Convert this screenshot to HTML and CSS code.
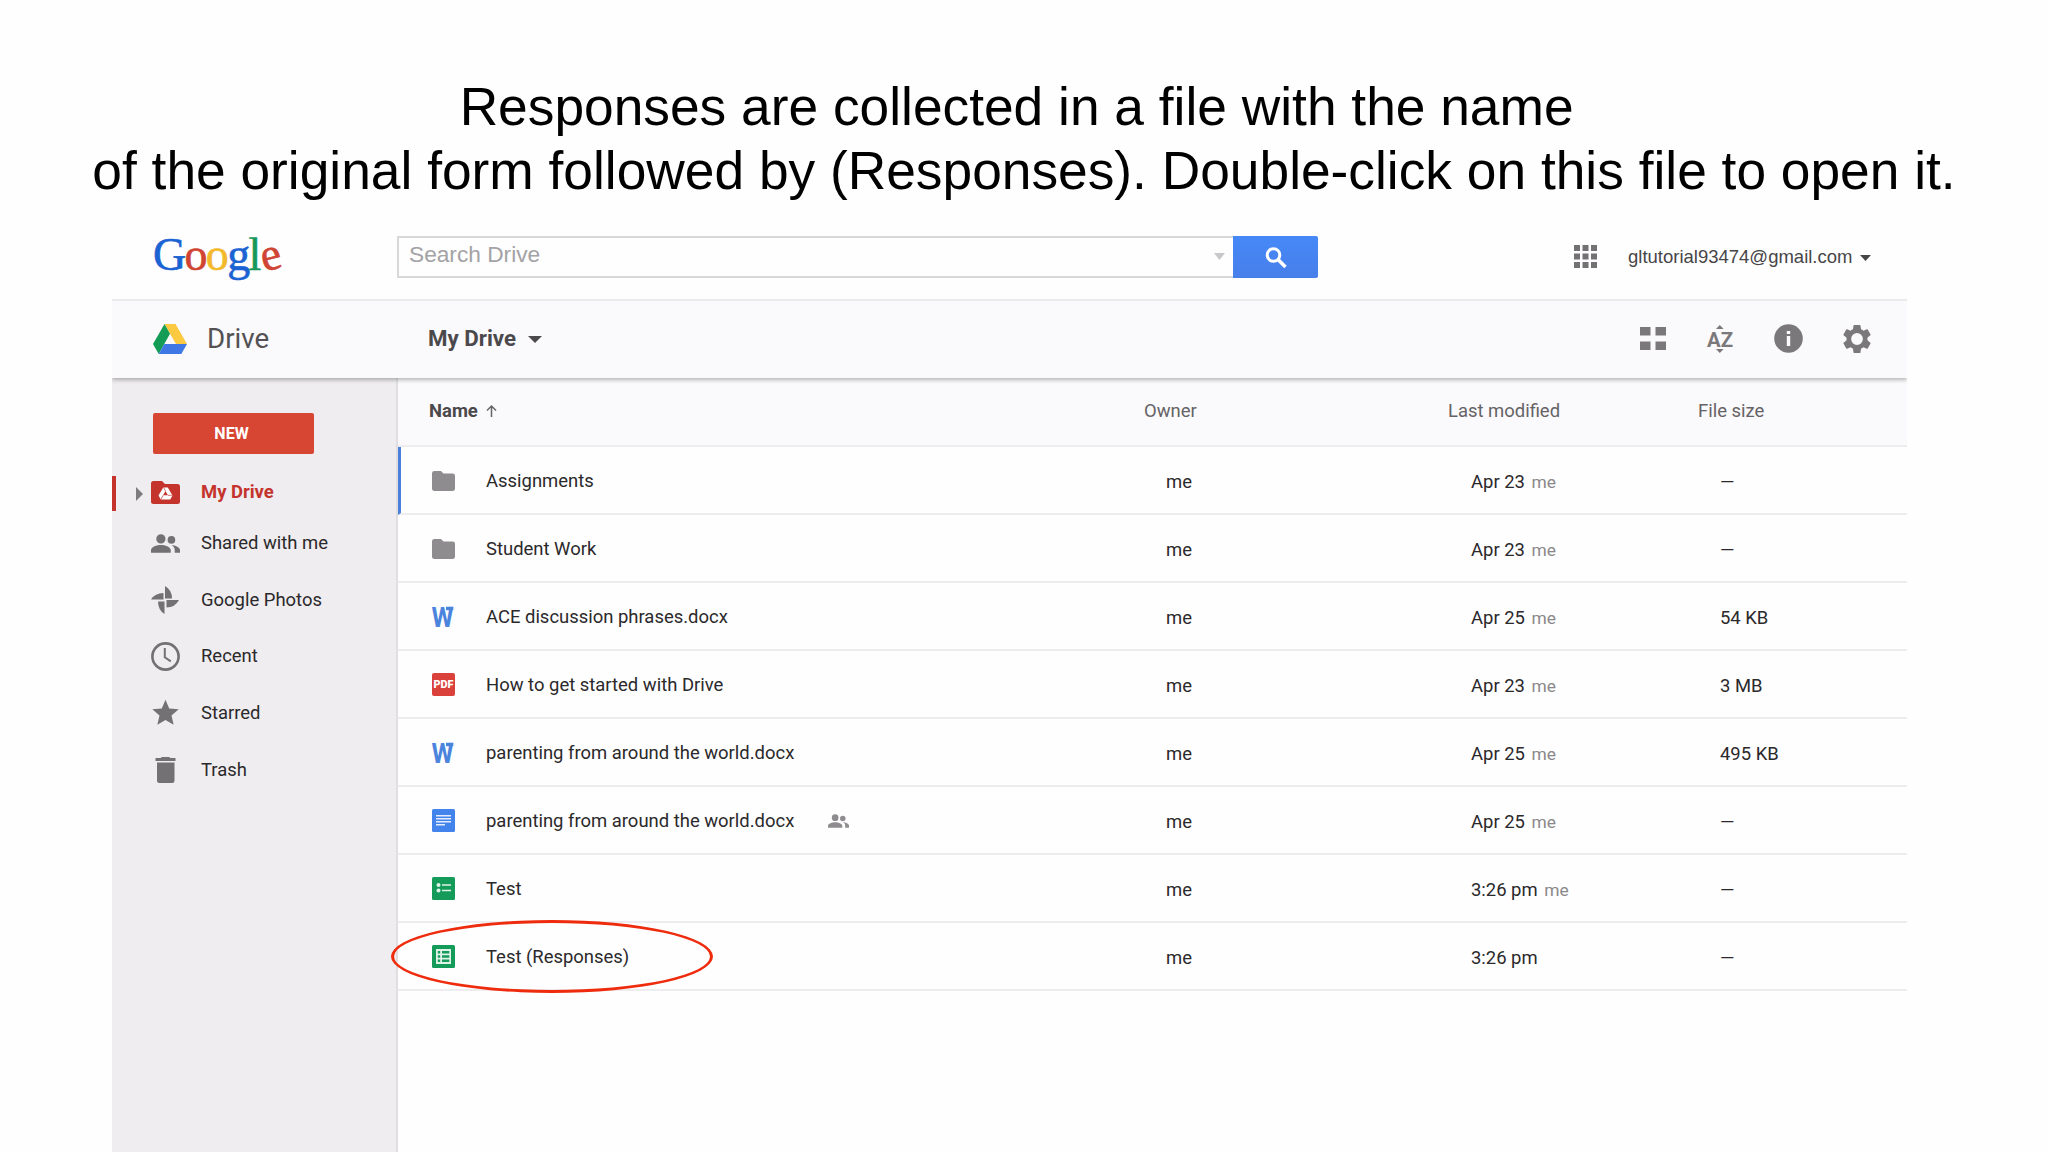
FILE: index.html
```
<!DOCTYPE html>
<html lang="en">
<head>
    <meta charset="UTF-8">
    <meta name="viewport" content="width=device-width, initial-scale=1.0">
    <title>My Drive - Google Drive</title>
    <link rel="stylesheet" href="styles.css">
</head>
<body>

<!-- shared icons -->
<svg class="sprite" aria-hidden="true">
    <symbol id="people" viewBox="1 5 22 14">
        <path d="M16.67 13.13C18.04 14.06 19 15.32 19 17v2h4v-2c0-2.18-3.57-3.47-6.33-3.87z M8.500 12a3.500 3.500 0 1 0 0-7 3.500 3.500 0 0 0 0 7z M16.500 12.200a2.900 2.900 0 1 0 0-5.800 2.900 2.900 0 0 0 0 5.800z M8.500 13.200C5.500 13.200 1 14.600 1 17v2h15v-2c0-2.400-4.500-3.800-7.500-3.800z"/>
    </symbol>
    <symbol id="folder" viewBox="0 0 23 20">
        <path d="M2.500 0h6.500l2.500 2.500h9q2.500 0 2.500 2.300v12.900q0 2.300-2.500 2.300h-18q-2.500 0-2.500-2.300v-15.400q0-2.300 2.500-2.300z"/>
    </symbol>
    <symbol id="word" viewBox="0 0 23 23">
        <text x="-0.500" y="22" font-size="28.500" font-weight="700" textLength="22" lengthAdjust="spacingAndGlyphs">W</text>
        <rect x="14" y="1.700" width="7.300" height="3.500"/>
    </symbol>
</svg>

<div class="slide">
    <h1>Responses are collected in a file with the name&nbsp;<br>of the original form followed by (Responses). Double-click on this file to open it.</h1>

    <div class="app">
        <div class="topbar">
            <div class="google"><span class="b">G</span><span class="r">o</span><span class="y">o</span><span class="b">g</span><span class="g">l</span><span class="r e">e</span></div>
            <div class="search">
                <span class="search-text">Search Drive</span>
                <svg class="search-caret" width="11" height="7" viewBox="0 0 11 7"><path d="M0 0h11L5.500 7z"/></svg>
            </div>
            <div class="search-btn">
                <svg width="24" height="24" viewBox="0 0 24 24"><circle cx="8.500" cy="8" r="6.300" fill="none" stroke="#fff" stroke-width="3"/><path d="M13 12.500L20.500 20" stroke="#fff" stroke-width="3.600"/></svg>
            </div>
            <svg class="apps" width="23" height="23" viewBox="0 0 23 23"><path d="M0 0h6v6H0z M8.500 0h6v6h-6z M17 0h6v6h-6z M0 8.500h6v6H0z M8.500 8.500h6v6h-6z M17 8.500h6v6h-6z M0 17h6v6H0z M8.500 17h6v6h-6z M17 17h6v6h-6z"/></svg>
            <span class="email">gltutorial93474@gmail.com</span>
            <svg class="email-caret" width="11" height="6" viewBox="0 0 11 6"><path d="M0 0h11L5.500 6z"/></svg>
        </div>

        <div class="toolbar">
            <svg class="drive-logo" width="34" height="30" viewBox="0 0 34 30">
                <path d="M11.500 0h11L34 20H23z" fill="#fbca41"/>
                <path d="M11.500 0L17 9.800 5.700 30 0 20z" fill="#149b56"/>
                <path d="M11.300 20H34l-5.700 10H5.700z" fill="#3f78e4"/>
            </svg>
            <span class="drive-name">Drive</span>
            <span class="path">My Drive</span>
            <svg class="path-caret" width="14" height="7" viewBox="0 0 14 7"><path d="M0 0h14L7 7z"/></svg>
            <div class="tools">
                <svg width="26" height="23" viewBox="0 0 26 23"><path d="M0 0h10.500v8.500H0z M15.500 0H26v8.500H15.500z M0 14.500h10.500V23H0z M15.500 14.500H26V23H15.500z"/></svg>
                <svg class="az" width="28" height="28" viewBox="0 0 28 28"><path d="M10 4L13.800 0l3.800 4z M10 24l3.800 4 3.800-4z"/><text x="1" y="21.500" textLength="26" lengthAdjust="spacingAndGlyphs">AZ</text></svg>
                <svg width="29" height="29" viewBox="0 0 29 29"><circle cx="14.500" cy="14.500" r="14.300"/><path d="M12.800 7h3.400v3h-3.400z M12.800 12h3.400v10h-3.400z" fill="#faf9fb"/></svg>
                <svg width="28" height="28" viewBox="2.200 2 19.600 20"><path d="M19.430 12.980c.040-.320.070-.640.070-.980s-.030-.660-.070-.980l2.110-1.650c.190-.150.240-.420.120-.640l-2-3.460c-.120-.220-.390-.300-.610-.220l-2.490 1c-.520-.400-1.080-.730-1.690-.980l-.380-2.650C14.460 2.180 14.250 2 14 2h-4c-.250 0-.460.180-.490.420l-.380 2.650c-.610.250-1.170.590-1.690.980l-2.490-1c-.230-.090-.490 0-.610.220l-2 3.460c-.130.220-.070.490.120.640l2.110 1.650c-.040.320-.070.650-.070.980s.030.660.070.980l-2.110 1.650c-.190.150-.240.420-.120.640l2 3.460c.120.220.390.300.610.220l2.490-1c.520.400 1.080.730 1.690.980l.380 2.650c.030.240.240.420.490.420h4c.250 0 .460-.180.490-.420l.380-2.650c.610-.250 1.170-.590 1.690-.980l2.490 1c.230.090.490 0 .610-.220l2-3.460c.120-.220.070-.490-.120-.640l-2.110-1.650zM12 16.200a4.200 4.200 0 1 1 0-8.400 4.200 4.200 0 0 1 0 8.400z"/></svg>
            </div>
        </div>

        <div class="main">
            <div class="sidebar">
                <div class="new-btn">NEW</div>
                <div class="nav active">
                    <svg class="expand" width="7" height="14" viewBox="0 0 7 14"><path d="M0 0l7 7-7 7z"/></svg>
                    <svg class="nav-icon" width="29" height="23" viewBox="0 0 29 23"><path d="M2.500 0h8.500l3 3h12.500q2.500 0 2.500 2.500v15q0 2.500-2.500 2.500h-24q-2.500 0-2.500-2.500v-18q0-2.500 2.500-2.500z"/><path d="M12.200 6.500h4.600l4.700 8-2.300 4H9.800l-2.300-4z" fill="#fff"/><path d="M14.500 10l2.400 4.300h-4.800z"/><path d="M14.500 10l-2-3.500M16.900 14.300h4.300M12.100 14.300L9.800 18.500" stroke="#c4342c" stroke-width=".7"/></svg>
                    <span>My Drive</span>
                </div>
                <div class="nav">
                    <svg class="nav-icon" width="29" height="19"><use href="#people"/></svg>
                    <span>Shared with me</span>
                </div>
                <div class="nav">
                    <svg class="nav-icon" width="29" height="28" viewBox="0 0 29 28"><path d="M14 0q7 4 7 12.500h-7z M28 14q-4 7.500-12.500 7.500V14z M13.500 28q-6.500-4-6.500-12.500h6.500z M0 13.500q4-6.500 12.500-6.500v6.500z"/></svg>
                    <span>Google Photos</span>
                </div>
                <div class="nav">
                    <svg class="nav-icon" width="29" height="29" viewBox="0 0 29 29"><circle cx="14.500" cy="14.500" r="13.100" fill="none" stroke="#737173" stroke-width="2.600"/><path d="M13.800 6v9.300l6 4" fill="none" stroke="#737173" stroke-width="2"/></svg>
                    <span>Recent</span>
                </div>
                <div class="nav">
                    <svg class="nav-icon" width="29" height="28" viewBox="1 2 22 20"><path d="M12 17.270L18.180 21l-1.640-7.030L22 9.240l-7.190-.610L12 2 9.190 8.630 2 9.240l5.460 4.730L5.820 21z"/></svg>
                    <span>Starred</span>
                </div>
                <div class="nav">
                    <svg class="nav-icon" width="29" height="26" viewBox="0 0 29 26"><path d="M9.500 1L11 0h7l1.500 1h5v3h-20v-3z M6 5.500h17.500v18q0 2.500-2.500 2.500H8.500Q6 26 6 23.500z"/></svg>
                    <span>Trash</span>
                </div>
            </div>

            <div class="files">
                <div class="head">
                    <span class="sorted">Name <svg width="11" height="12" viewBox="0 0 11 12"><path d="M5.500 12V1M1 5.500L5.500 1 10 5.500" fill="none" stroke="#666" stroke-width="1.500"/></svg></span>
                    <span>Owner</span>
                    <span>Last modified</span>
                    <span>File size</span>
                </div>
                <div class="row selected">
                    <svg class="icon gray" width="23" height="20"><use href="#folder"/></svg>
                    <span class="name">Assignments</span>
                    <span>me</span><span>Apr 23 <small>me</small></span><span class="dash">—</span>
                </div>
                <div class="row">
                    <svg class="icon gray" width="23" height="20"><use href="#folder"/></svg>
                    <span class="name">Student Work</span>
                    <span>me</span><span>Apr 23 <small>me</small></span><span class="dash">—</span>
                </div>
                <div class="row">
                    <svg class="icon blue" width="23" height="23"><use href="#word"/></svg>
                    <span class="name">ACE discussion phrases.docx</span>
                    <span>me</span><span>Apr 25 <small>me</small></span><span>54 KB</span>
                </div>
                <div class="row">
                    <svg class="icon" width="23" height="23" viewBox="0 0 23 23"><rect width="23" height="23" rx="2" fill="#d9413a"/><text class="pdf" x="1.500" y="15.300" textLength="20" lengthAdjust="spacingAndGlyphs">PDF</text></svg>
                    <span class="name">How to get started with Drive</span>
                    <span>me</span><span>Apr 23 <small>me</small></span><span>3 MB</span>
                </div>
                <div class="row">
                    <svg class="icon blue" width="23" height="23"><use href="#word"/></svg>
                    <span class="name">parenting from around the world.docx</span>
                    <span>me</span><span>Apr 25 <small>me</small></span><span>495 KB</span>
                </div>
                <div class="row">
                    <svg class="icon" width="23" height="23" viewBox="0 0 23 23"><rect width="23" height="23" rx="1.500" fill="#4383ec"/><path d="M4 6.700h15M4 9.700h15M4 12.700h15M4 15.700h9" stroke="#e3edfd" stroke-width="1.600"/></svg>
                    <span class="name">parenting from around the world.docx <svg class="gray" width="21" height="14"><use href="#people"/></svg></span>
                    <span>me</span><span>Apr 25 <small>me</small></span><span class="dash">—</span>
                </div>
                <div class="row">
                    <svg class="icon" width="23" height="23" viewBox="0 0 23 23"><rect width="23" height="23" rx="1.500" fill="#149b5a"/><path d="M10 8h9M10 13.500h9" stroke="#dff2e8" stroke-width="1.700"/><circle cx="6.500" cy="8" r="2" fill="#dff2e8"/><circle cx="6.500" cy="13.500" r="2" fill="#dff2e8"/></svg>
                    <span class="name">Test</span>
                    <span>me</span><span>3:26 pm <small>me</small></span><span class="dash">—</span>
                </div>
                <div class="row">
                    <svg class="icon" width="23" height="23" viewBox="0 0 23 23"><rect width="23" height="23" rx="1.500" fill="#149b5a"/><path d="M4 4h15v15H4z" fill="#dff2e8"/><path d="M5.800 6h2.400v2.500H5.800z M5.800 10.200h2.400v2.500H5.800z M5.800 14.400h2.400v2.500H5.800z M10 6h7.300v2.500H10z M10 10.200h7.300v2.500H10z M10 14.400h7.300v2.500H10z" fill="#149b5a"/></svg>
                    <span class="name">Test (Responses)</span>
                    <span>me</span><span>3:26 pm</span><span class="dash">—</span>
                    <div class="marker"></div>
                </div>
            </div>
        </div>
    </div>
</div>

</body>
</html>
```
FILE: styles.css
```
* {
    box-sizing: border-box;
    margin: 0;
    padding: 0;
}
body {
    background: #fefefe;
    font-family: Roboto, sans-serif;
    font-size: 18.45px;
    color: #2b292b;
}
svg {
    display: block;
    flex: none;
    overflow: visible;
}
.sprite {
    position: absolute;
    width: 0;
    height: 0;
}
.slide {
    height: 1152px;
    overflow: hidden;
    display: flex;
    flex-direction: column;
    padding-top: 75px;
}
h1 {
    height: 144px;
    font-family: "Liberation Sans", Arial, sans-serif;
    font-size: 53.3px;
    font-weight: 400;
    line-height: 64px;
    text-align: center;
    white-space: nowrap;
    color: #000;
}
.app {
    width: 1795px;
    margin-left: 112px;
    flex: 1;
    display: flex;
    flex-direction: column;
}

/* top bar */
.topbar {
    height: 82px;
    display: flex;
    align-items: flex-start;
    padding-top: 17px;
    border-bottom: 2px solid #ebe9ec;
}
.google {
    width: 285px;
    height: 50px;
    padding-left: 41px;
    font-family: "Liberation Serif", serif;
    font-size: 46px;
    line-height: 50px;
    letter-spacing: -1.7px;
    -webkit-text-stroke: 0.6px;
    margin-top: -6px;
}
.google span {
    display: inline-block;
}
.b { color: #1b63d3; }
.r { color: #d04433; }
.y { color: #f2b92d; }
.g { color: #17985a; }
.e {
    transform: rotate(-14deg);
}
.search {
    width: 836px;
    height: 42px;
    border: 2px solid #d8d7da;
    border-right: none;
    display: flex;
    justify-content: space-between;
    padding: 0 8px 0 10px;
    font-family: "Liberation Sans", Arial, sans-serif;
    font-size: 22.7px;
    line-height: 32px;
    color: #a3a2a5;
}
.search-caret {
    margin-top: 15px;
    fill: #c8c7ca;
}
.search-btn {
    width: 85px;
    height: 42px;
    background: linear-gradient(#4688f8, #477fea);
    border-radius: 0 2px 2px 0;
    padding: 11px 0 0 32px;
}
.apps {
    margin: 9px 0 0 256px;
    fill: #737173;
}
.email {
    margin: 9px 9px 0 31px;
    width: 223px;
    font-family: "Liberation Sans", Arial, sans-serif;
    font-size: 18.5px;
    line-height: 24px;
    color: #474547;
}
.email-caret {
    margin-top: 19px;
    fill: #474547;
}

/* toolbar */
.toolbar {
    position: relative;
    z-index: 1;
    height: 77px;
    display: flex;
    align-items: center;
    background: #faf9fb;
    padding-left: 41px;
    padding-bottom: 2px;
    box-shadow: 0 2px 4px rgba(0, 0, 0, 0.28);
    clip-path: inset(0 0 -10px 0);
}
.drive-name {
    width: 221px;
    margin-left: 20px;
    font-size: 27.7px;
    color: #535153;
}
.path {
    margin-top: -2px;
    font-size: 22.3px;
    font-weight: 700;
    color: #4b494b;
}
.path-caret {
    margin-left: 12px;
    margin-top: 1px;
    fill: #4b494b;
}
.tools {
    flex: 1;
    display: flex;
    justify-content: flex-end;
    align-items: center;
    gap: 40px;
    padding-right: 36px;
    fill: #7b787b;
}
.az text {
    font-size: 21px;
    font-weight: 700;
}

/* sidebar */
.main {
    flex: 1;
    display: flex;
}
.sidebar {
    width: 286px;
    background: #efedef;
    border-right: 2px solid #e0dee1;
    padding-top: 35px;
}
.new-btn {
    width: 161px;
    height: 41px;
    margin-left: 41px;
    padding-right: 4px;
    background: #d74533;
    border-radius: 2px;
    color: #fff;
    font-size: 16px;
    font-weight: 700;
    line-height: 41px;
    text-align: center;
}
.nav {
    position: relative;
    height: 56.7px;
    display: flex;
    align-items: center;
    gap: 21px;
    padding-left: 39px;
    fill: #737173;
}
.nav span {
    margin-top: -1px;
}
.active {
    height: 35px;
    margin: 22px 0 4px;
    border-left: 4px solid #c4342c;
    padding-left: 35px;
    color: #c4342c;
    font-weight: 700;
    fill: #c4342c;
}
.active span {
    margin-top: -4px;
}
.active .nav-icon {
    margin-top: -2px;
}
.expand {
    position: absolute;
    left: 20px;
    fill: #7f7c7f;
}

/* file list */
.files {
    flex: 1;
}
.head {
    height: 69px;
    display: grid;
    grid-template-columns: 715px 304px 250px 1fr;
    align-items: center;
    padding: 0 0 2px 31px;
    background: #faf9fb;
    border-bottom: 2px solid #eeecef;
    color: #656365;
}
.sorted {
    display: flex;
    align-items: center;
    gap: 8px;
    font-weight: 700;
    color: #4b494b;
}
.row {
    position: relative;
    height: 68px;
    display: grid;
    grid-template-columns: 54px 680px 305px 249px 1fr;
    align-items: center;
    padding-left: 34px;
    border-bottom: 2px solid #eeecef;
}
.selected {
    border-left: 3px solid #4a80d9;
    padding-left: 31px;
}
.row span {
    padding-top: 4px;
}
.row .name {
    display: flex;
    align-items: center;
    gap: 34px;
    padding-top: 2px;
}
.row small {
    font-size: 17.4px;
    color: #8b888b;
    margin-left: 2px;
}
.row .dash {
    font-size: 18.45px;
    padding-top: 3px;
}
.icon {
    margin-top: 1px;
}
.gray {
    fill: #8f8c90;
}
.blue {
    fill: #4a84dc;
}
.pdf {
    fill: #fff;
    font-size: 10.5px;
    font-weight: 900;
}

/* red ring round the responses file */
.marker {
    position: absolute;
    left: -7px;
    top: -3px;
    width: 322px;
    height: 73px;
    border: 3px solid #ee2b0c;
    border-radius: 50%;
}
```
